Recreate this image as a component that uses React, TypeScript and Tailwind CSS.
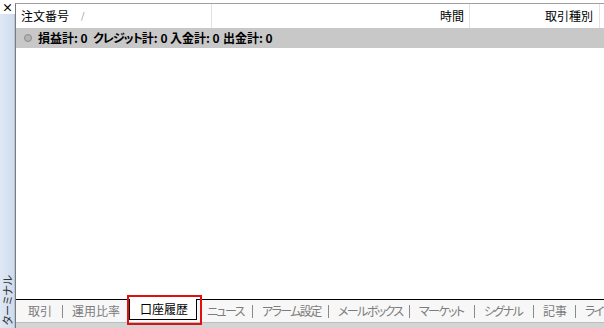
import React from 'react';

// tab labels with the width each one takes in the bar
const tabs: { label: string; w: string; kana?: boolean }[] = [
  { label: '取引', w: 'w-[24px]' },
  { label: '運用比率', w: 'w-[44px]' },
  { label: '口座履歴', w: '' },
  { label: 'ニュース', w: 'w-[35px]', kana: true },
  { label: 'アラーム設定', w: 'w-[56px]', kana: true },
  { label: 'メールボックス', w: 'w-[61px]', kana: true },
  { label: 'マーケット', w: 'w-[45px]', kana: true },
  { label: 'シグナル', w: 'w-[39px]', kana: true },
  { label: '記事', w: 'w-[22px]' },
  { label: 'ライブラリ', w: 'w-[50px]', kana: true },
];

const Sep: React.FC = () => <span className="w-px h-[13px] bg-[#8a8a8a] ml-[10px] mr-[9px] shrink-0" />;

const App: React.FC = () => {
  const font = "font-['Meiryo_UI','Noto_Sans_CJK_JP',sans-serif] [font-feature-settings:'palt']";

  return (
    <div className={`w-[604px] h-[328px] flex overflow-hidden bg-white text-[12px] text-black ${font}`}>
      {/* side strip */}
      <div className="w-[15px] flex flex-col shrink-0">
        <div className="h-[14px] bg-white flex items-start justify-center pt-[2px]">
          <span className="text-[11px] leading-[10px] font-bold">×</span>
        </div>
        <div className="flex-1 flex flex-col justify-end bg-gradient-to-r from-[#dfe8f5] to-[#cfdcee] border-r border-[#b8c6da]">
          <div className="[writing-mode:vertical-rl] [text-orientation:sideways] rotate-180 text-[11px] leading-[13px] text-[#333] mb-[3px] self-center">
            ターミナル
          </div>
        </div>
      </div>

      {/* main */}
      <div className="flex-1 flex flex-col border-l border-[#7a7a7a] mt-[3px] border-t border-t-[#a0a0a0] min-w-0">
        {/* column header */}
        <div className="h-[24px] flex items-center bg-white shrink-0">
          <div className="w-[196px] h-full flex items-center pl-[5px] border-r border-[#e2e2e2]">
            <span>注文番号</span>
            <span className="ml-[12px] text-[9px] text-[#888]">/</span>
          </div>
          <div className="w-[258px] h-full flex items-center justify-end pr-[5px] border-r border-[#e2e2e2]">時間</div>
          <div className="w-[130px] h-full flex items-center justify-end pr-[6px] border-r border-[#e2e2e2]">取引種別</div>
          <div className="flex-1" />
        </div>

        {/* summary row */}
        <div className="h-[20px] bg-[#c8c8c8] flex items-center pl-[8px] shrink-0 font-bold whitespace-nowrap">
          <span className="w-[8px] h-[8px] rounded-full bg-[#b4b4b4] border border-[#8c8c8c] mr-[6px] shrink-0" />
          <span className="w-[55px] shrink-0">損益計: 0</span>
          <span className="w-[77px] shrink-0"><span className="tracking-[-1px]">クレジット</span>計: 0</span>
          <span className="w-[53px] shrink-0">入金計: 0</span>
          <span className="shrink-0">出金計: 0</span>
        </div>

        <div className="flex-1 bg-white" />

        {/* tab bar */}
        <div className="h-[23px] border-t border-black bg-[#f7f7f7] flex items-start pl-[12px] shrink-0 whitespace-nowrap">
          {tabs.map((t, i) => {
            const active = t.label === '口座履歴';
            const prevActive = i > 0 && tabs[i - 1].label === '口座履歴';
            const nextActive = tabs[i + 1]?.label === '口座履歴';
            return (
              <React.Fragment key={t.label}>
                {active ? (
                  <div className="relative -mt-px h-[21px] w-[68px] pl-[10px] bg-white border-x border-b border-black flex items-center text-black ml-[13px] mr-[10px] shrink-0">
                    {t.label}
                    <div className="absolute -left-[3px] -top-[4px] -right-[6px] -bottom-[6px] border-2 border-[#e01010]" />
                  </div>
                ) : (
                  <span className={`h-[22px] flex items-center text-[#7c7c7c] shrink-0 ${t.w} ${t.kana ? 'tracking-[-1.6px]' : ''}`}>
                    {t.label}
                  </span>
                )}
                {!active && !nextActive && !prevActive && i < tabs.length - 1 && (
                  <span className="h-[22px] flex items-center"><Sep /></span>
                )}
                {prevActive && i < tabs.length - 1 && (
                  <span className="h-[22px] flex items-center"><Sep /></span>
                )}
              </React.Fragment>
            );
          })}
        </div>
        <div className="h-[6px] bg-[#d4d4d4] border-t border-[#bdbdbd] shrink-0" />
      </div>
    </div>
  );
};

export default App;
